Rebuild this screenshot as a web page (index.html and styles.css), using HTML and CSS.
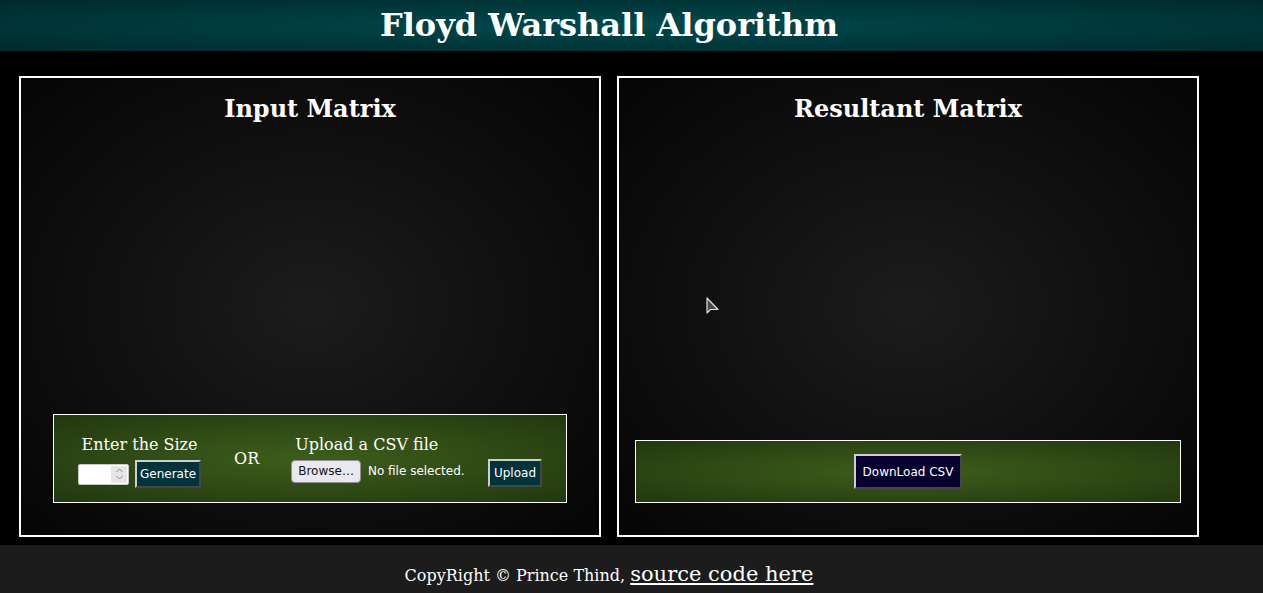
FILE: index.html
```html
<!DOCTYPE html>
<html lang="en">
<head>
<meta charset="utf-8">
<title>Floyd Warshall Algorithm</title>
<link rel="stylesheet" href="styles.css">
</head>
<body>
<header class="topbar">
  <div class="topbar-inner"><h1 class="title">Floyd Warshall Algorithm</h1></div>
</header>
<main class="main">
  <section class="panel">
    <h2 class="panel-title">Input Matrix</h2>
    <div class="panel-body"></div>
    <div class="controls">
      <div class="group size-group">
        <div class="label">Enter the Size</div>
        <div class="row">
          <div class="num">
            <span class="num-field"></span>
            <span class="spin">
              <svg width="9" height="14" viewBox="0 0 9 14"><path d="M1.5 5 L4.5 2 L7.5 5 M1.5 9 L4.5 12 L7.5 9" fill="none" stroke="#8a8a8a" stroke-width="1"/></svg>
            </span>
          </div>
          <button class="btn btn-teal">Generate</button>
        </div>
      </div>
      <div class="or">OR</div>
      <div class="group file-group">
        <div class="label file-label">Upload a CSV file</div>
        <div class="row file-row">
          <span class="browse">Browse…</span>
          <span class="nofile">No file selected.</span>
        </div>
      </div>
      <button class="btn btn-teal upload">Upload</button>
    </div>
  </section>
  <section class="panel">
    <h2 class="panel-title">Resultant Matrix</h2>
    <div class="panel-body"></div>
    <div class="controls controls-right">
      <button class="btn btn-navy">DownLoad CSV</button>
    </div>
    <svg class="cursor" width="14" height="22" viewBox="0 0 14 22"><path d="M1 1 L1 16 L4.5 12.5 L12 12.5 Z" fill="#4a4a4a" stroke="#e0e0e0" stroke-width="1.2" stroke-linejoin="round"/></svg>
  </section>
</main>
<footer class="footer">
  <div class="footer-inner">CopyRight © Prince Thind, <a class="src" href="#">source code here</a></div>
</footer>
</body>
</html>
```
FILE: styles.css
```css
* { box-sizing: border-box; }
html, body { margin: 0; padding: 0; }
body {
  background: #000;
  color: #fff;
  font-family: "DejaVu Serif", serif;
  width: 1263px;
  height: 593px;
  overflow: hidden;
}
.topbar {
  height: 51px;
  background: radial-gradient(ellipse at center, #004a4d 0%, #003a3c 50%, #002a2c 100%);
}
.topbar-inner {
  width: 1180px;
  margin-left: 19px;
  text-align: center;
}
.title {
  margin: 0;
  font-size: 32px;
  font-weight: bold;
  line-height: 51px;
  color: #fff;
}
.main {
  display: flex;
  gap: 16px;
  padding: 25px 0 0 19px;
  height: 494px;
}
.panel {
  position: relative;
  width: 582px;
  height: 461px;
  border: 2px solid #fff;
  background: radial-gradient(ellipse at center, #1c1c1c 0%, #101010 50%, #050505 100%);
  display: flex;
  flex-direction: column;
}
.panel-title {
  margin: 0;
  padding-top: 17px;
  text-align: center;
  font-size: 24px;
  font-weight: bold;
  line-height: 28px;
}
.panel-body { flex: 1; }
.controls {
  margin: 0 32px 32px;
  height: 89px;
  border: 1px solid #fff;
  background: radial-gradient(ellipse at center, #3d5e1a 0%, #304b15 50%, #22370e 100%);
  display: flex;
  align-items: center;
  padding: 0 24px 0 24px;
}
.controls-right {
  margin: 0 16px 32px;
  height: 63px;
  justify-content: center;
}
.group {
  display: flex;
  flex-direction: column;
  align-items: center;
}
.label {
  font-size: 16px;
  line-height: 19px;
  color: #fff;
  margin-bottom: 6px;
  white-space: nowrap;
}
.row {
  display: flex;
  align-items: center;
  gap: 6px;
  white-space: nowrap;
}
.size-group { margin-top: 6px; }
.num {
  width: 51px;
  height: 21px;
  background: #fff;
  border: 1px solid #c8c8c8;
  border-radius: 2px;
  display: flex;
  justify-content: flex-end;
  padding: 1px;
}
.spin {
  width: 16px;
  background: #e6e6e6;
  display: flex;
  align-items: center;
  justify-content: center;
}
.btn {
  font-family: "DejaVu Sans", sans-serif;
  font-size: 12px;
  color: #fff;
  border: 2px outset #bdbdbd;
  padding: 0 3px;
  cursor: pointer;
}
.btn-teal {
  background: #00333a;
  height: 28px;
  border-color: #cfcfcf #9a9a9a #9a9a9a #cfcfcf;
}
.or {
  margin-left: 33px;
  font-size: 16px;
}
.file-group {
  margin-left: 32px;
  margin-top: 0;
  align-items: flex-start;
}
.file-label { padding-left: 4px; }
.file-row { gap: 7px; }
.browse {
  font-family: "DejaVu Sans", sans-serif;
  font-size: 12px;
  color: #111;
  background: #e9e9ed;
  border: 1px solid #8f8f9d;
  border-radius: 4px;
  height: 23px;
  line-height: 21px;
  padding: 0 6px;
}
.nofile {
  font-family: "DejaVu Sans", sans-serif;
  font-size: 12px;
  color: #fff;
}
.upload { margin-left: auto; margin-top: 28px; padding: 0 4px; }
.btn-navy {
  background: #06002e;
  height: 35px;
  padding: 0 7px;
  border-color: #cfcfcf #9a9a9a #9a9a9a #cfcfcf;
}
.cursor {
  position: absolute;
  left: 87px;
  top: 219px;
}
.footer {
  height: 48px;
  background: #1c1c1c;
  padding-top: 17px;
  color: #fff;
}
.footer-inner {
  width: 1180px;
  margin-left: 19px;
  text-align: center;
  font-size: 16px;
}
.src {
  color: #fff;
  font-size: 21px;
  text-decoration: underline;
}
```
